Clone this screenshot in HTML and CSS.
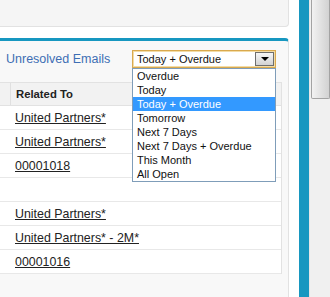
FILE: index.html
```html
<!DOCTYPE html>
<html lang="en">
<head>
    <meta charset="UTF-8">
    <title>Unresolved Emails</title>
    <link rel="stylesheet" href="styles.css">
</head>
<body>
    <div class="page">
        <div class="main">
            <div class="top-panel"></div>
            <div class="panel">
                <div class="panel-head">
                    <span class="title">Unresolved Emails</span>
                    <div class="select">
                        <span class="select-value">Today + Overdue</span>
                        <span class="select-btn"><span class="arrow"></span></span>
                        <ul class="options">
                            <li>Overdue</li>
                            <li>Today</li>
                            <li class="selected">Today + Overdue</li>
                            <li>Tomorrow</li>
                            <li>Next 7 Days</li>
                            <li>Next 7 Days + Overdue</li>
                            <li>This Month</li>
                            <li>All Open</li>
                        </ul>
                    </div>
                </div>
                <div class="list">
                    <div class="row head">
                        <div class="cell-first"></div>
                        <div class="cell">Related To</div>
                    </div>
                    <div class="row"><div class="cell-first"></div><div class="cell"><a href="#">United Partners*</a></div></div>
                    <div class="row"><div class="cell-first"></div><div class="cell"><a href="#">United Partners*</a></div></div>
                    <div class="row"><div class="cell-first"></div><div class="cell"><a href="#">00001018</a></div></div>
                    <div class="row"><div class="cell-first"></div><div class="cell"></div></div>
                    <div class="row"><div class="cell-first"></div><div class="cell"><a href="#">United Partners*</a></div></div>
                    <div class="row"><div class="cell-first"></div><div class="cell"><a href="#">United Partners* - 2M*</a></div></div>
                    <div class="row"><div class="cell-first"></div><div class="cell"><a href="#">00001016</a></div></div>
                </div>
            </div>
        </div>
        <div class="spacer"></div>
        <div class="bluebar"></div>
        <div class="scrollbar"><div class="thumb"></div></div>
    </div>
</body>
</html>
```

FILE: styles.css
```css
html, body {
    margin: 0;
    height: 100%;
    overflow: hidden;
}
body {
    font-family: 'Liberation Sans', Arial, sans-serif;
    background: #fff;
    color: #222;
}
.page {
    display: flex;
    height: 297px;
}
.main {
    width: 289px;
    display: flex;
    flex-direction: column;
}
.top-panel {
    height: 26px;
    background: #f5f5f5;
    border-bottom: 1px solid #e2e2e2;
    border-right: 1px solid #e2e2e2;
    border-bottom-right-radius: 4px;
    margin-bottom: 11px;
}
.panel {
    flex: 1;
    background: #f8f8f8;
    border-top: 3px solid #1797c0;
    border-right: 1px solid #e2e2e2;
    border-top-right-radius: 4px;
    padding-right: 6px;
}
.panel-head {
    height: 41px;
    display: flex;
    align-items: flex-start;
    padding-top: 9px;
    box-sizing: border-box;
}
.title {
    margin-left: 6px;
    width: 126px;
    font-size: 12.5px;
    line-height: 18px;
    color: #3d6eb4;
}
.select {
    position: relative;
    width: 144px;
    height: 18px;
    box-sizing: border-box;
    border: 1px solid #d9a94e;
    box-shadow: inset 0 0 0 1px #f3dca6;
    background: #fff;
    font-size: 11px;
}
.select-value {
    display: block;
    padding-left: 4px;
    line-height: 16px;
    color: #111;
}
.select-btn {
    position: absolute;
    top: 1px;
    right: 1px;
    width: 17px;
    height: 12px;
    border: 1px solid #6e6e6e;
    background: linear-gradient(#f6f6f6, #d2d2d2);
    display: flex;
    justify-content: center;
    align-items: center;
}
.arrow {
    width: 0;
    height: 0;
    border-left: 4px solid transparent;
    border-right: 4px solid transparent;
    border-top: 4px solid #000;
}
.options {
    position: absolute;
    top: 17px;
    left: -1px;
    width: 144px;
    box-sizing: border-box;
    margin: 0;
    padding: 0;
    list-style: none;
    background: #fff;
    border: 1px solid #7f9db9;
    z-index: 2;
}
.options li {
    height: 14px;
    line-height: 14px;
    padding-left: 4px;
    color: #111;
}
.options li.selected {
    background: #3399ff;
    color: #fff;
}
.list {
    background: #fff;
    border-right: 1px solid #e2e2e2;
    border-top: 1px solid #e2e2e2;
}
.row {
    display: flex;
    height: 23px;
    border-bottom: 1px solid #e8e8e8;
    font-size: 12.4px;
}
.row.head {
    height: 22px;
    background: #f2f2f2;
    border-bottom: 1px solid #e2e2e2;
    font-size: 11.3px;
    font-weight: bold;
    color: #222;
}
.cell-first {
    width: 10px;
}
.head .cell-first {
    border-right: 1px solid #e0e0e0;
}
.cell {
    padding-left: 5px;
    display: flex;
    align-items: center;
}
.row .cell {
    padding-left: 5px;
}
.row:not(.head) .cell {
    padding-left: 5px;
    margin-left: 0;
}
a {
    color: #222;
    text-decoration: underline;
}
.spacer {
    width: 10px;
}
.bluebar {
    width: 10px;
    background: #1797c0;
}
.scrollbar {
    width: 21px;
    background: #f0f0f0;
    border-left: 1px solid #e6e6e6;
    box-sizing: border-box;
    padding-left: 1px;
}
.thumb {
    height: 99px;
    box-sizing: border-box;
    border: 1px solid #a3a3a3;
    border-top: none;
    border-radius: 0 0 2px 2px;
    background: linear-gradient(to right, #f2f2f2, #e2e2e2 50%, #d2d2d2);
}
```
